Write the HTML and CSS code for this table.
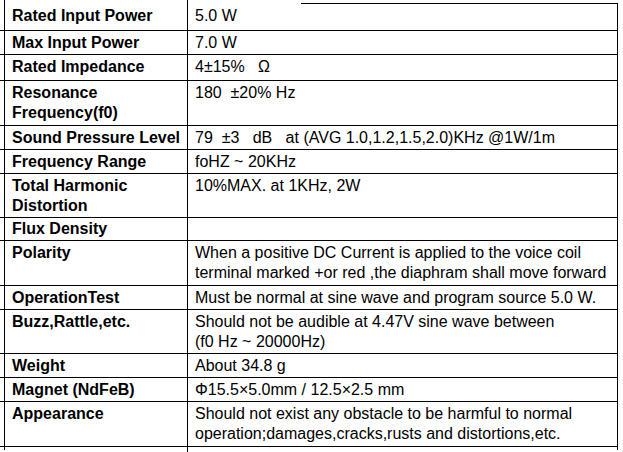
FILE: index.html
```html
<!DOCTYPE html>
<html lang="en">
<head>
<meta charset="utf-8">
<title>Speaker specification</title>
<link rel="stylesheet" href="styles.css">
</head>
<body>
<table class="spec">
  <colgroup>
    <col class="c-ghost">
    <col class="c-name">
    <col class="c-value">
  </colgroup>
  <tbody>
    <tr class="cut cut-top"><td class="g"></td><td class="n"></td><td class="v"></td></tr>
    <tr class="r-first"><td class="g"></td><td class="n">Rated Input Power</td><td class="v v-topline">5.0 W</td></tr>
    <tr><td class="g"></td><td class="n">Max Input Power</td><td class="v">7.0 W</td></tr>
    <tr class="pb3"><td class="g"></td><td class="n">Rated Impedance</td><td class="v">4±15%&nbsp;&nbsp; Ω</td></tr>
    <tr class="pb17"><td class="g"></td><td class="n">Resonance<br>Frequency(f0)</td><td class="v">180&nbsp; ±20% Hz</td></tr>
    <tr><td class="g"></td><td class="n">Sound Pressure Level</td><td class="v">79&nbsp; ±3 &nbsp; dB &nbsp; at (AVG 1.0,1.2,1.5,2.0)KHz @1W/1m</td></tr>
    <tr><td class="g"></td><td class="n">Frequency Range</td><td class="v">foHZ ~ 20KHz</td></tr>
    <tr class="pb16"><td class="g"></td><td class="n">Total Harmonic<br>Distortion</td><td class="v">10%MAX. at 1KHz, 2W</td></tr>
    <tr class="r-short"><td class="g"></td><td class="n">Flux Density</td><td class="v"></td></tr>
    <tr class="pb23"><td class="g"></td><td class="n">Polarity</td><td class="v">When a positive DC Current is applied to the voice coil<br>terminal marked +or red ,the diaphram shall move forward</td></tr>
    <tr><td class="g"></td><td class="n">OperationTest</td><td class="v">Must be normal at sine wave and program source 5.0 W.</td></tr>
    <tr class="pb1"><td class="g"></td><td class="n">Buzz,Rattle,etc.</td><td class="v">Should not be audible at 4.47V sine wave between<br>(f0 Hz ~ 20000Hz)</td></tr>
    <tr><td class="g"></td><td class="n">Weight</td><td class="v">About 34.8 g</td></tr>
    <tr><td class="g"></td><td class="n">Magnet (NdFeB)</td><td class="v">Φ15.5×5.0mm / 12.5×2.5 mm</td></tr>
    <tr class="pb17"><td class="g"></td><td class="n">Appearance</td><td class="v">Should not exist any obstacle to be harmful to normal<br>operation;damages,cracks,rusts and distortions,etc.</td></tr>
    <tr class="cut tail-a"><td class="g"></td><td class="n"></td><td class="v"></td></tr>
    <tr class="cut tail-b"><td class="g"></td><td class="n"></td><td class="v"></td></tr>
  </tbody>
</table>
</body>
</html>
```
FILE: styles.css
```css
html, body {
  margin: 0;
  padding: 0;
  background: #fff;
  overflow: hidden;
}

body {
  font-family: "Liberation Sans", Arial, sans-serif;
  font-size: 16px;
  line-height: 20px;
  color: #000;
}

.spec {
  border-collapse: separate;
  border-spacing: 0;
  table-layout: fixed;
  width: 624px;
  margin-left: -6px;
}

.c-ghost { width: 10px; }
.c-name { width: 183px; }
.c-value { width: 431px; }

.spec td {
  box-sizing: border-box;
  padding: 2px 0 1px 7px;
  vertical-align: top;
  border-bottom: 1px solid #000;
  white-space: nowrap;
}

.spec td.g {
  padding: 0;
}

.spec td.n {
  border-left: 1px solid #000;
  font-weight: bold;
}

.spec td.v {
  border-left: 1px solid #000;
  border-right: 1px solid #000;
}

/* partial top rule over the value column */
.spec td.v-topline {
  background-image: linear-gradient(#000, #000);
  background-repeat: no-repeat;
  background-size: calc(100% - 113px) 1px;
  background-position: right top;
}

.r-first td { padding-top: 3px; padding-bottom: 4px; }
.pb3 td { padding-bottom: 3px; }
.pb17 td { padding-bottom: 1.7px; }
.pb16 td { padding-bottom: 1.6px; }
.pb23 td { padding-bottom: 2.3px; }
.pb1 td { padding-bottom: 1px; }
.r-short td { padding-top: 0.5px; padding-bottom: 1.2px; }

/* cropped edges of the table */
.spec tr.cut td {
  padding: 0;
  height: 3px;
  font-size: 0;
  line-height: 0;
  border-bottom: 0;
}

.spec tr.cut-top td.v { border-right: 0; }

.spec tr.tail-b td.n { border-left: 0; }
.spec tr.tail-b td.v { border-right: 0; }
.spec td.g { border-left: 0; }
.spec tr.cut td.g { border-bottom: 0; }
```
